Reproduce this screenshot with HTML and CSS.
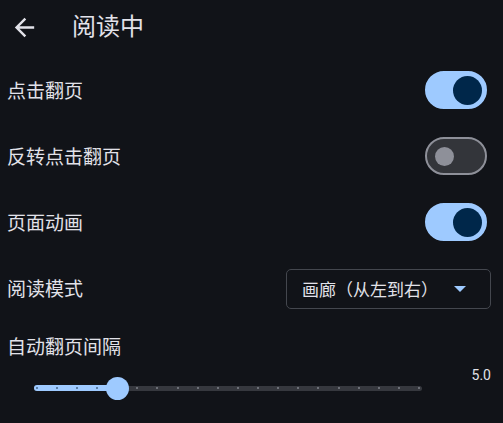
FILE: index.html
```html
<!DOCTYPE html>
<html lang="zh">
<head>
    <meta charset="UTF-8">
    <meta name="viewport" content="width=device-width, initial-scale=1.0">
    <title>阅读中</title>
    <link rel="stylesheet" href="styles.css">
</head>
<body>
    <header class="top-bar">
        <button class="back-btn" aria-label="返回">
            <svg viewBox="0 0 24 24" width="29" height="29">
                <path d="M20 11H7.83l5.59-5.59L12 4l-8 8 8 8 1.41-1.41L7.83 13H20v-2z" fill="currentColor"/>
            </svg>
        </button>
        <h1 class="title">阅读中</h1>
    </header>

    <div class="settings">
        <div class="row">
            <span class="label">点击翻页</span>
            <div class="switch on"><span class="thumb"></span></div>
        </div>
        <div class="row">
            <span class="label">反转点击翻页</span>
            <div class="switch"><span class="thumb"></span></div>
        </div>
        <div class="row">
            <span class="label">页面动画</span>
            <div class="switch on"><span class="thumb"></span></div>
        </div>
        <div class="row">
            <span class="label">阅读模式</span>
            <div class="dropdown">
                <span>画廊（从左到右）</span>
                <span class="caret"></span>
            </div>
        </div>

        <div class="slider-block">
            <div class="label slider-label">自动翻页间隔</div>
            <div class="slider-row">
                <div class="slider">
                    <div class="track"></div>
                    <div class="track-active" style="width: 84px"></div>
                    <div class="ticks">
                        <i class="on"></i><i class="on"></i><i class="on"></i><i class="on"></i><i class="on"></i>
                        <i></i><i></i><i></i><i></i><i></i>
                        <i></i><i></i><i></i><i></i><i></i>
                        <i></i><i></i><i></i><i></i><i></i>
                    </div>
                    <div class="slider-thumb" style="left: 83.4px"></div>
                </div>
                <span class="value">5.0</span>
            </div>
        </div>
    </div>
</body>
</html>
```

FILE: styles.css
```css
* {
    margin: 0;
    padding: 0;
    box-sizing: border-box;
}

body {
    background: #111318;
    color: #e2e2e9;
    font-family: Roboto, "Noto Sans CJK SC", sans-serif;
    width: 503px;
    height: 423px;
    overflow: hidden;
}

.top-bar {
    height: 54px;
    display: flex;
    align-items: center;
    padding-left: 10px;
}

.back-btn {
    width: 29px;
    height: 29px;
    background: none;
    border: none;
    color: #e2e2e9;
    display: flex;
}

.title {
    margin-left: 33px;
    font-size: 24px;
    font-weight: 400;
    line-height: 30px;
}

.settings {
    padding-top: 3px;
}

.row {
    height: 66px;
    display: flex;
    align-items: center;
    justify-content: space-between;
    padding: 0 16px 0 7px;
}

.label {
    font-size: 19px;
    line-height: 26px;
}

.row .label {
    padding-top: 3px;
}

.switch {
    width: 62px;
    height: 38px;
    border-radius: 19px;
    background: #33353a;
    border: 2px solid #8e9099;
    display: flex;
    align-items: center;
    padding-left: 8px;
}

.switch .thumb {
    width: 19px;
    height: 19px;
    border-radius: 50%;
    background: #8e9099;
}

.switch.on {
    background: #9ecaff;
    border-color: #9ecaff;
    justify-content: flex-end;
    padding: 0 3px 0 0;
}

.switch.on .thumb {
    width: 29px;
    height: 29px;
    background: #00274a;
}

.dropdown {
    width: 205px;
    height: 40px;
    margin-right: -4px;
    margin-top: 1px;
    border: 1px solid #44474e;
    border-radius: 5px;
    display: flex;
    align-items: center;
    justify-content: space-between;
    padding: 0 24px 0 15px;
    font-size: 17px;
}

.caret {
    width: 0;
    height: 0;
    border-left: 6px solid transparent;
    border-right: 6px solid transparent;
    border-top: 6px solid #9ecaff;
}

.slider-label {
    padding: 14px 0 0 7px;
    height: 45px;
}

.slider-row {
    height: 44px;
    display: flex;
    align-items: center;
    justify-content: space-between;
    padding: 0 12px 0 34px;
}

.slider {
    position: relative;
    width: 388px;
    height: 24px;
}

.track {
    position: absolute;
    left: 0;
    right: 0;
    top: 9.5px;
    height: 5px;
    border-radius: 3px;
    background: #36383e;
}

.track-active {
    position: absolute;
    left: 0;
    top: 9px;
    height: 6px;
    border-radius: 3px;
    background: #9ecaff;
}

.ticks {
    position: absolute;
    left: 1.7px;
    right: 1.7px;
    top: 11px;
    display: flex;
    justify-content: space-between;
}

.ticks i {
    width: 2px;
    height: 2px;
    background: #6c6f76;
}

.ticks i.on {
    background: #5a7ea6;
}

.slider-thumb {
    position: absolute;
    top: 0.5px;
    width: 23px;
    height: 23px;
    margin-left: -11.5px;
    border-radius: 50%;
    background: #9ecaff;
}

.value {
    align-self: flex-start;
    font-size: 14px;
    line-height: 18px;
    color: #e2e2e9;
}
```
